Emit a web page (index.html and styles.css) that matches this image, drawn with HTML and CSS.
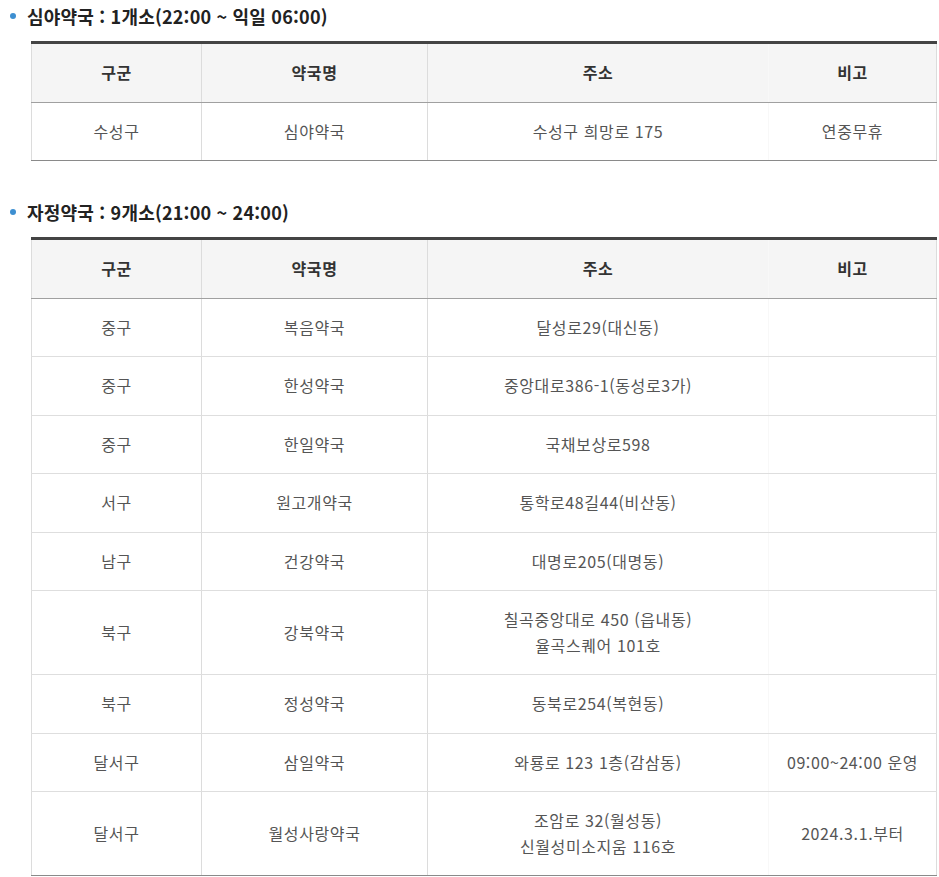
FILE: index.html
```html
<!DOCTYPE html>
<html lang="ko">
<head>
<meta charset="utf-8">
<title>약국 안내</title>
<link rel="stylesheet" href="styles.css">
</head>
<body>
<div class="page">
  <h2 class="title"><span class="dot"></span>심야약국 : 1개소(22:00 ~ 익일 06:00)</h2>
  <table class="tbl">
    <colgroup><col class="c1"><col class="c2"><col class="c3"><col class="c4"></colgroup>
    <thead>
      <tr><th>구군</th><th>약국명</th><th>주소</th><th class="last">비고</th></tr>
    </thead>
    <tbody>
      <tr><td>수성구</td><td>심야약국</td><td>수성구 희망로 175</td><td class="last">연중무휴</td></tr>
    </tbody>
  </table>

  <h2 class="title second"><span class="dot"></span>자정약국 : 9개소(21:00 ~ 24:00)</h2>
  <table class="tbl">
    <colgroup><col class="c1"><col class="c2"><col class="c3"><col class="c4"></colgroup>
    <thead>
      <tr><th>구군</th><th>약국명</th><th>주소</th><th class="last">비고</th></tr>
    </thead>
    <tbody>
      <tr><td>중구</td><td>복음약국</td><td>달성로29(대신동)</td><td class="last"></td></tr>
      <tr><td>중구</td><td>한성약국</td><td>중앙대로386-1(동성로3가)</td><td class="last"></td></tr>
      <tr><td>중구</td><td>한일약국</td><td>국채보상로598</td><td class="last"></td></tr>
      <tr><td>서구</td><td>원고개약국</td><td>통학로48길44(비산동)</td><td class="last"></td></tr>
      <tr><td>남구</td><td>건강약국</td><td>대명로205(대명동)</td><td class="last"></td></tr>
      <tr><td>북구</td><td>강북약국</td><td>칠곡중앙대로 450 (읍내동)<br>율곡스퀘어 101호</td><td class="last"></td></tr>
      <tr><td>북구</td><td>정성약국</td><td>동북로254(복현동)</td><td class="last"></td></tr>
      <tr><td>달서구</td><td>삼일약국</td><td>와룡로 123 1층(감삼동)</td><td class="last">09:00~24:00 운영</td></tr>
      <tr><td>달서구</td><td>월성사랑약국</td><td>조암로 32(월성동)<br>신월성미소지움 116호</td><td class="last">2024.3.1.부터</td></tr>
    </tbody>
  </table>
</div>
</body>
</html>
```

FILE: styles.css
```css
html, body {
  margin: 0;
  padding: 0;
  background: #fff;
}
body {
  font-family: "Noto Sans CJK KR", "Noto Sans", sans-serif;
  color: #555;
}
.page {
  padding: 4px 0 0 0;
}
.title {
  display: flex;
  align-items: center;
  margin: 0 0 13px 0;
  padding-left: 10px;
  font-size: 18px;
  line-height: 24px;
  font-weight: 700;
  color: #222;
  letter-spacing: 0.2px;
}
.title.second {
  margin-top: 39px;
}
.dot {
  width: 6px;
  height: 6px;
  border-radius: 50%;
  background: #3d8fd1;
  margin-right: 11px;
  flex: none;
}
.tbl {
  margin-left: 31px;
  width: 905px;
  border-collapse: collapse;
  table-layout: fixed;
  border-top: 3px solid #444;
  border-bottom: 1px solid #8a8a8a;
  font-size: 16px;
}
.c1 { width: 170px; }
.c2 { width: 226px; }
.c3 { width: 341px; }
.c4 { width: 168px; }
.tbl th, .tbl td {
  text-align: center;
  vertical-align: middle;
  padding: 16px 2px;
  line-height: 25.5px;
  border-left: 1px solid #dcdcdc;
  border-right: 1px solid #dcdcdc;
  letter-spacing: 0.6px;
}
.tbl th {
  background: #f5f5f5;
  color: #333;
  font-weight: 700;
  border-bottom: 1px solid #a0a0a0;
}
.tbl td {
  background: #fff;
  font-weight: 400;
  border-bottom: 1px solid #dedede;
}
.tbl tbody tr:last-child td {
  border-bottom: 1px solid #8a8a8a;
}
.tbl th.last, .tbl td.last {
  border-left: 1px solid #f8f8f8;
}
.tbl th:nth-child(3), .tbl td:nth-child(3) {
  border-right: 1px solid #f8f8f8;
}
```
